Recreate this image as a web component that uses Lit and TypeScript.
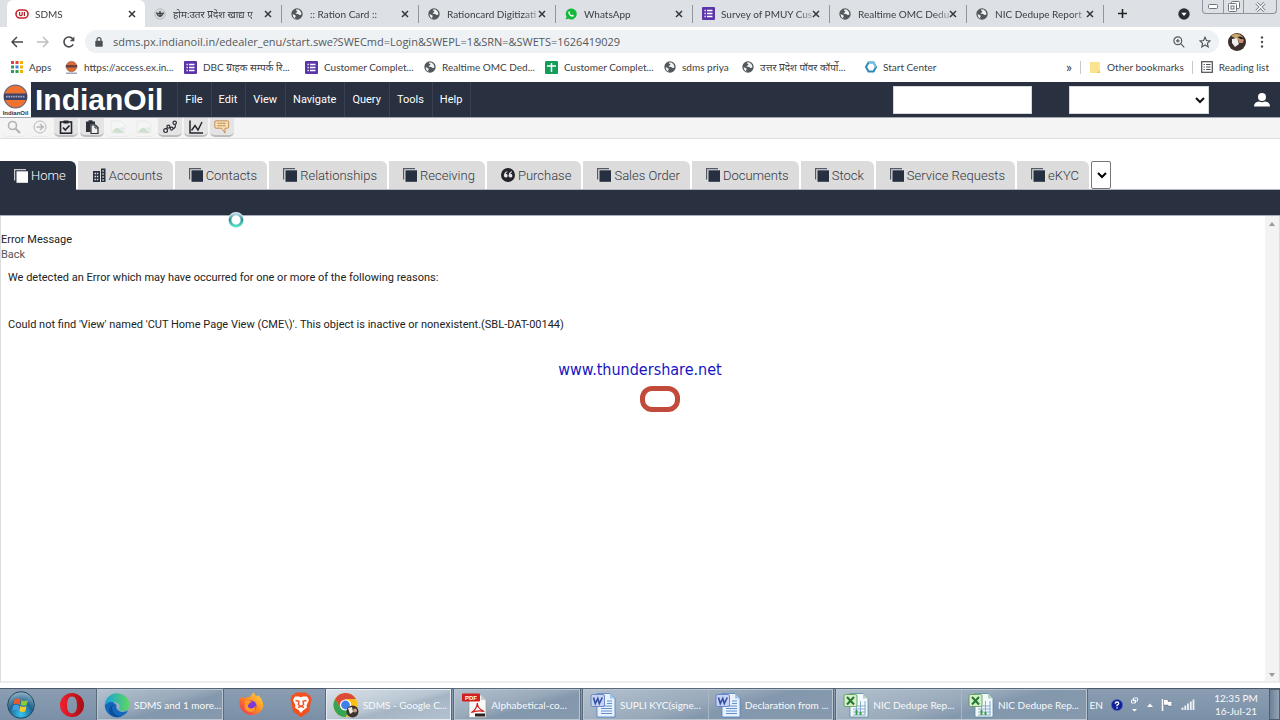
import { LitElement, html, svg, css, TemplateResult } from "lit";
import { customElement } from "lit/decorators.js";
import { classMap } from "lit/directives/class-map.js";
import { styleMap } from "lit/directives/style-map.js";

const draw = (w: number, h: number, box: string, body: TemplateResult) =>
  html`<svg width=${w} height=${h} viewBox=${box} aria-hidden="true">${body}</svg>`;

const icons: Record<string, () => TemplateResult> = {
  siebel: () => draw(14, 14, "0 0 14 14", svg`
    <rect x="1" y="3" width="12" height="8" rx="4" fill="#fff" stroke="#c8242b" stroke-width="1.6"/>
    <path d="M4.600 5v2.200q0 1.500 1.300 1.500t1.300-1.500V5M9.400 5v4" fill="none" stroke="#a81c22" stroke-width="1.200"/>`),
  emblem: () => draw(12, 12, "0 0 12 12", svg`
    <circle cx="6" cy="6" r="5.200" fill="#d4d7da" stroke="#96999c" stroke-width=".8" stroke-dasharray="1 .7"/>
    <path d="M2.200 4.600q2 2 3.800 0q1.800 2 3.800 0M3 6q1.400 2.600 3 2.400T9 6M6 3v6" fill="none" stroke="#3c4043" stroke-width="1.300"/>`),
  globe: () => draw(12, 12, "0 0 12 12", svg`
    <circle cx="6" cy="6" r="5.700" fill="#54585c"/>
    <path d="M1.500 6.300q1.800.2 3 1.200.8.900-.3 1.600-.4.900.3 1.800Q1.800 9.800 1.500 6.300zM5 1.400q-.300 1.500 1.200 1.600.500 1-.600 1.500-1.200.300-.800 1.200 2.200-.3 3.200.700.600.800 1.800.400l.7-.900Q10 2.800 7.500 1.500z" fill="#fff" opacity=".92"/>`),
  whatsapp: () => draw(12, 12, "0 0 12 12", svg`
    <path d="M.6 11.500l.900-2.800A5.500 5.500 0 1 1 3.500 10.700z" fill="#12b93c"/>
    <path d="M4.300 3.200l1 1.700-.5.700q.6 1.200 1.800 1.700l.7-.700 1.500.8q0 1.400-1.500 1.300Q3.900 8 3.200 4.500q0-1 1.100-1.300z" fill="#fff"/>`),
  forms: () => draw(13, 13, "0 0 13 13", svg`
    <rect width="13" height="13" rx="1" fill="#5b35a8"/>
    <path d="M5 3.500h5.500M5 6.500h5.500M5 9.500h5.500M2.500 3.500h1.300M2.500 6.500h1.300M2.500 9.500h1.300" stroke="#fff" stroke-width="1.400"/>`),
  sheet: () => draw(13, 13, "0 0 13 13", svg`
    <rect width="13" height="13" rx="1" fill="#129d58"/>
    <path d="M6.500 2v9M2 5h9" stroke="#fff" stroke-width="1.500"/>`),
  apps: () => draw(12, 12, "0 0 12 12", svg`
    <g><rect x="0" y="0" width="3" height="3" fill="#e0443a"/><rect x="4.500" y="0" width="3" height="3" fill="#e0443a"/><rect x="9" y="0" width="3" height="3" fill="#f0b400"/>
    <rect x="0" y="4.500" width="3" height="3" fill="#30a050"/><rect x="4.500" y="4.500" width="3" height="3" fill="#3f83f0"/><rect x="9" y="4.500" width="3" height="3" fill="#f0b400"/>
    <rect x="0" y="9" width="3" height="3" fill="#30a050"/><rect x="4.500" y="9" width="3" height="3" fill="#30a050"/><rect x="9" y="9" width="3" height="3" fill="#f0b400"/></g>`),
  orb: () => draw(13, 13, "0 0 13 13", svg`
    <circle cx="6.500" cy="5.500" r="5.300" fill="#dd6a30" stroke="#7a5a55" stroke-width=".5"/><rect x=".8" y="4" width="11.400" height="2.500" fill="#6a3f42"/>
    <path d="M1 12.200h11" stroke="#8a8fa8" stroke-width="1.200"/>`),
  center: () => draw(12, 12, "0 0 12 12", svg`
    <path d="M3.500 1.500h5L11 6l-2.500 4.500h-5L1 6z" fill="none" stroke="#2d87b8" stroke-width="2"/>
    <path d="M3.500 1.500h5L11 6" fill="none" stroke="#7cc0e2" stroke-width="2"/>`),
  folder: () => draw(12, 13, "0 0 12 13", svg`
    <path d="M1 1h9.500v8.500H11V12H1z" fill="#fae083"/><path d="M1 1h9.500v8.500L8 12H1z" fill="#fbe38e"/><path d="M8 12h3V9.500z" fill="#e9c648"/>`),
  list: () => draw(12, 12, "0 0 12 12", svg`
    <rect x=".7" y=".7" width="10.600" height="10.600" fill="none" stroke="#4a4d51" stroke-width="1.200"/>
    <path d="M2.500 3.500h1.300M5 3.500h4.500M2.500 6h1.300M5 6h4.500M2.500 8.500h1.300M5 8.500h4.500" stroke="#4a4d51" stroke-width="1.200"/>`),
  close: () => draw(8, 8, "0 0 8 8", svg`<path d="M1 1l6 6M7 1L1 7" stroke="#33373b" stroke-width="1.500"/>`),
  plus: () => draw(11, 11, "0 0 11 11", svg`<path d="M5.500 1v9M1 5.500h9" stroke="#222" stroke-width="1.600"/>`),
  down: () => draw(12, 12, "0 0 12 12", svg`<circle cx="6" cy="6" r="5.700" fill="#2b2e32"/><path d="M3.300 4.700h5.400L6 8z" fill="#fff"/>`),
  back: () => draw(12, 12, "0 0 12 12", svg`<path d="M12 6H1.500M6 1L1 6l5 5" fill="none" stroke="#46494d" stroke-width="1.500"/>`),
  forward: () => draw(12, 12, "0 0 12 12", svg`<path d="M0 6h10.500M6 1l5 5-5 5" fill="none" stroke="#bcbfc2" stroke-width="1.500"/>`),
  reload: () => draw(12, 12, "0 0 12 12", svg`<path d="M10.200 8.300A4.900 4.900 0 1 1 9.700 2.800" fill="none" stroke="#46494d" stroke-width="1.600"/><path d="M11.400.6v4.600H6.800z" fill="#46494d"/>`),
  lock: () => draw(8, 10, "0 0 8 10", svg`<rect x=".3" y="3.800" width="7.400" height="6" rx=".8" fill="#4d5155"/><path d="M2 4V2.700a2 2 0 0 1 4 0V4" fill="none" stroke="#4d5155" stroke-width="1.200"/>`),
  zoom: () => draw(12, 12, "0 0 12 12", svg`<circle cx="4.800" cy="4.800" r="3.900" fill="none" stroke="#55595d" stroke-width="1.200"/><path d="M7.700 7.700L11.300 11.300M3 4.800h3.600M4.800 3v3.600" stroke="#55595d" stroke-width="1.200"/>`),
  star: () => draw(12, 12, "0 0 12 12", svg`<path d="M6 1.200l1.500 3.300 3.600.4-2.700 2.400.8 3.600L6 9l-3.200 1.900.8-3.600L.9 4.900l3.600-.4z" fill="none" stroke="#4d5155" stroke-width="1.100"/>`),
  avatar: () => draw(18, 18, "0 0 18 18", svg`
    <circle cx="9" cy="9" r="9" fill="#3a2f2a"/><path d="M3 3Q9-2 15 4L12 8 7 5z" fill="#c9a667"/><path d="M4 6l5-1 2 6-4 3-3-4z" fill="#f0efee"/>
    <circle cx="13" cy="7.500" r="2.600" fill="#c98f72"/><path d="M9.500 4.500q3-2.500 6 1l-2 .8z" fill="#241b18"/>`),
  dots: () => draw(4, 12, "0 0 4 12", svg`<g fill="#4d5155"><circle cx="2" cy="1.500" r="1.200"/><circle cx="2" cy="6" r="1.200"/><circle cx="2" cy="10.500" r="1.200"/></g>`),
  user: () => draw(16, 16, "0 0 16 16", svg`<circle cx="8" cy="5" r="4" fill="#fff"/><path d="M0 14.500Q0 10 5 9.500q3 1.500 6 0 5 .5 5 5z" fill="#fff"/>`),
  logo: () => draw(31, 35, "0 0 31 35", svg`
    <rect width="31" height="35" fill="#fff"/><circle cx="15.500" cy="14.500" r="11.400" fill="#ee7330" stroke="#6d6678" stroke-width="1.200"/>
    <rect x="4" y="11.500" width="23" height="6.500" rx="1" fill="#3c4268"/><path d="M6 14.700h19" stroke="#a9aec8" stroke-width="1.800" stroke-dasharray="1.600 .8"/>
    <text x="15.500" y="32.500" text-anchor="middle" font-family="Liberation Sans" font-weight="700" font-size="6" fill="#2b3155">IndianOil</text>`),
  search: () => draw(14, 14, "0 0 14 14", svg`<circle cx="5.500" cy="5.500" r="4" fill="none" stroke="#b4b4b4" stroke-width="1.600"/><path d="M8.500 8.500L13 13" stroke="#b4b4b4" stroke-width="2.200"/>`),
  go: () => draw(14, 14, "0 0 14 14", svg`<circle cx="7" cy="7" r="6" fill="none" stroke="#b8b8b8" stroke-width="1"/><path d="M3.500 7h6M7 4l3.200 3L7 10" fill="none" stroke="#b8b8b8" stroke-width="1.500"/>`),
  check: () => draw(14, 14, "0 0 14 14", svg`<rect x="1.500" y="2" width="11" height="11.200" fill="none" stroke="#23262d" stroke-width="1.600"/><rect x="4.500" y=".5" width="5" height="3" fill="#23262d"/><path d="M4 7.500l2.300 2.500L10.500 5.500" fill="none" stroke="#23262d" stroke-width="1.700"/>`),
  paste: () => draw(14, 14, "0 0 14 14", svg`<path d="M1 1.500h9v3H5.500V12H1z" fill="#2d3036"/><rect x="3.500" y=".3" width="4" height="2" fill="#2d3036"/><path d="M6 5h4.500L13 7.500v6H6z" fill="#eee" stroke="#2d3036" stroke-width="1.200"/><path d="M10 5v3h3" fill="none" stroke="#2d3036"/>`),
  faded: () => draw(16, 14, "0 0 16 14", svg`<path d="M1 1h10l4 4v8H1z" fill="#f4f6f4" stroke="#e8eae9"/><path d="M2 12.500q4-7 8-3l4 3.500z" fill="#cfdfce"/><path d="M9 8l5 5V7z" fill="#e2ebf0"/>`),
  nodes: () => draw(14, 14, "0 0 14 14", svg`<g fill="none" stroke="#2c2f35" stroke-width="1.200"><circle cx="2.600" cy="10.600" r="1.900"/><circle cx="5.400" cy="6.600" r="1.500"/><circle cx="8.600" cy="8.600" r="1.500"/><circle cx="11.700" cy="2.800" r="1.700"/><path d="M12.300 4.600q.6 3.400-2.400 4M3.300 8.800l1.200-1.200"/></g>`),
  chart: () => draw(14, 14, "0 0 14 14", svg`<path d="M1 .5v12.500h13" fill="none" stroke="#23262d" stroke-width="1.500"/><path d="M2.500 10.500L6 5.500l3 4.500 4-8" fill="none" stroke="#23262d" stroke-width="1.400"/>`),
  note: () => draw(16, 14, "0 0 16 14", svg`<path d="M2 .8h11.500q1.200 0 1.200 1.200v5q0 1.200-1.200 1.200H11V13L7.500 8.200H2Q.8 8.200.8 7V2Q.8.8 2 .8z" fill="#f8deb2" stroke="#c0905a"/><path d="M3.500 3.200h8.500M3.500 5.700h8.500" stroke="#b1834e" stroke-width="1.100" stroke-dasharray="2.200 .5"/>`),
  pages: () => draw(14, 14, "0 0 14 14", svg`<path d="M.6 11.500V.6H12" fill="none" stroke="currentColor" stroke-width="1.200" opacity=".75"/><rect x="2.500" y="2.300" width="11.500" height="11.500" fill="currentColor"/>`),
  building: () => draw(14, 14, "0 0 14 14", svg`<path d="M1 3h7v11H1zM9 .5h4.500V14H9z" fill="#293040"/><path d="M2.500 5.500h4.500M2.500 8.500h4.500M2.500 11.500h4.500M10.300 3h2M10.300 6h2M10.300 9h2M10.300 12h2" stroke="#dcdcdc" stroke-width="1.300" stroke-dasharray="1.500 .8"/>`),
  quote: () => draw(14, 14, "0 0 14 14", svg`<circle cx="7" cy="7" r="7" fill="#23252b"/><path d="M6.300 3.200Q3 4 2.900 7.500a1.900 1.900 0 1 0 1.700-1.700Q5 4.600 6.300 4.300zM11 3.200Q7.700 4 7.600 7.500a1.900 1.900 0 1 0 1.700-1.700Q9.700 4.600 11 4.300z" fill="#e4e4e4"/>`),
  start: () => draw(28, 28, "0 0 28 28", svg`
    <defs><radialGradient id="g1" cx=".5" cy=".85" r=".9"><stop offset="0" stop-color="#38c5ee"/><stop offset=".5" stop-color="#1d6594"/><stop offset="1" stop-color="#a9c0cf"/></radialGradient></defs>
    <circle cx="14" cy="14" r="13.300" fill="url(#g1)" stroke="#27465c"/>
    <path d="M7.500 8.500q3-2 6 0l-1 5q-3-1.700-6 0z" fill="#ea5a29"/><path d="M14.500 9q3 1.700 6.500 0l-1.300 5q-3 1.500-6.200-.3z" fill="#8fc73e"/>
    <path d="M6.200 14.700q3-1.700 6 0l-1 5q-3-1.700-6 0z" fill="#3f9fe0"/><path d="M13.300 15q3 1.800 6.200.2l-1.200 5q-3 1.500-6-.3z" fill="#fbc926"/>`),
  opera: () => draw(26, 26, "0 0 26 26", svg`<defs><linearGradient id="g2" x2="1" y2="0"><stop offset="0" stop-color="#f4202f"/><stop offset="1" stop-color="#a70e16"/></linearGradient></defs>
    <path fill-rule="evenodd" d="M13 1a12 12 0 1 0 0 24a12 12 0 1 0 0-24zM13 4.500q5 0 5 8.500t-5 8.500-5-8.500 5-8.500z" fill="url(#g2)"/>`),
  edge: () => draw(26, 26, "0 0 26 26", svg`<defs><linearGradient id="g3" x2="1" y2="0"><stop offset="0" stop-color="#1ba0dc"/><stop offset="1" stop-color="#5bd85f"/></linearGradient></defs>
    <path d="M.7 13A12.300 12.300 0 0 0 20 23q3-2 4-4.500-5 2.500-9 .5-3.500-2-2.500-6l-6-5z" fill="#1268bd"/>
    <path d="M.8 13A12.300 12.300 0 0 1 25.300 12q.3 6.500-5.500 7-6 .3-4.500-3 1.500-3-2.300-5Q6 7.500.8 13z" fill="url(#g3)"/>
    <path d="M9.500 12.500q-3 4 .8 9 3 3.500 7.700 2.500-3.500 2-8 .8Q4 22 5.500 16q1-3 4-3.500z" fill="#0c4f9c"/>`),
  firefox: () => draw(26, 26, "0 0 26 26", svg`<defs><linearGradient id="g4" x1="1" x2="0" y2="1"><stop offset="0" stop-color="#ffe14a"/><stop offset=".5" stop-color="#ff8a1f"/><stop offset="1" stop-color="#f0245e"/></linearGradient></defs>
    <path d="M2 7l1.500-3 2.500 2.500q3-2 6-1.500 1-3 4-5 0 3 3 4.500l1-1.500q5 4 5.300 11.500A12 12 0 1 1 2 7z" fill="url(#g4)"/><circle cx="13" cy="14" r="5.500" fill="#7b3ad8"/><path d="M7 9q4-1.500 7 1-3 .5-3.500 2.500-2 3 2 4 4 0 5-3 .8 6.500-5.500 6.500Q5 19 7 9z" fill="#ff9a26"/>`),
  brave: () => draw(22, 26, "0 0 22 26", svg`<path d="M6 .5h10l2.500 2.500H20l1.700 4.500-1 3-1.700 9L11 25.500 3 19.500l-1.700-9-1-3L2 3h1.500z" fill="#f1501f"/><path d="M5 4.500h4l2 .7 2-.7h4L19 8l-2.500 5.500.5 2-4 3L11 21l-2-2.500-4-3 .5-2L3 8z" fill="#fff"/><path d="M5.500 8.500l3.500.8-.7 3.200 2.700 2 2.700-2-.7-3.200 3.500-.8M8 15.500l3-1.200 3 1.200" fill="none" stroke="#f1501f" stroke-width="1.400"/>`),
  chrome: () => draw(26, 26, "0 0 26 26", svg`<circle cx="12.500" cy="13" r="12" fill="#fbc116"/><path d="M2.100 7A12 12 0 0 1 22.900 7H12.500L7.300 16z" fill="#dc4a3a"/><path d="M2.100 7A12 12 0 0 0 12.500 25l5.200-9-10.400 0z" fill="#35a554"/>
    <circle cx="12.500" cy="13" r="5.600" fill="#fff"/><circle cx="12.500" cy="13" r="4.400" fill="#3f7fe8"/><circle cx="19.500" cy="19.500" r="6" fill="#3d332c"/><path d="M15 16l4-1 1 5-3 2z" fill="#efece8"/><circle cx="22" cy="18.500" r="2" fill="#c9a27e"/>`),
  pdf: () => draw(26, 26, "0 0 26 26", svg`<path d="M8 3h12l5 5v17.500H8z" fill="#f8f8f8" stroke="#9a9a9a" stroke-width=".7"/><path d="M20 3v5h5z" fill="#ccc"/><rect x="1" y="1.500" width="18" height="8" rx="1" fill="#d21f1f"/>
    <text x="10" y="8" text-anchor="middle" font-family="Liberation Sans" font-weight="700" font-size="6" fill="#fff">PDF</text><path d="M10.500 20.500Q16 17 16.300 11q.3 6 7 8.500-7-1.500-13 1z" fill="none" stroke="#d21f1f" stroke-width="1.200"/><rect x="14" y="21.500" width="10" height="3" fill="#2a2020"/>`),
  word: () => draw(26, 26, "0 0 26 26", svg`<path d="M7 1.500h13l5 5V25H7z" fill="#e9f2fc" stroke="#4c7fc4" stroke-width=".8"/><path d="M20 1.500v5h5z" fill="#9fc3ea"/><path d="M11 14h11M11 16.500h11M11 19h11M11 21.500h11M17 9h5M17 11.500h5" stroke="#5f90d0" stroke-width="1.100"/>
    <rect x="1" y="2.500" width="13.500" height="12" rx="1.500" fill="#c5d2f3" stroke="#5873bb" stroke-width=".8"/><path d="M3.500 5.500l1.800 6 2.500-5 1.500 5 3-6" fill="none" stroke="#3450a0" stroke-width="1.600"/>`),
  excel: () => draw(26, 26, "0 0 26 26", svg`<path d="M7 1.500h13l5 5V25H7z" fill="#f2f8fc" stroke="#5b8a9c" stroke-width=".8"/><path d="M20 1.500v5h5z" fill="#b4d4c0"/><path d="M10 14h12.500M10 17h12.500M10 20h12.500M10 23h12.500M13.500 14v9M17.500 9v14M22 9v14" stroke="#7aa5c8" stroke-width=".9"/><path d="M13.500 18v5M17.500 20v3" stroke="#3c9b46" stroke-width="2"/>
    <rect x="1" y="2.500" width="13" height="12" rx="1.500" fill="#d8ecd0" stroke="#4d9a45" stroke-width=".8"/><path d="M4 5l7 7.500M11 5l-7 7.500" stroke="#237a2c" stroke-width="2"/>`),
  help: () => draw(12, 12, "0 0 12 12", svg`<circle cx="6" cy="6" r="5.600" fill="#10209a" stroke="#5363b8" stroke-width=".6"/><path d="M4.200 4.700Q4.300 3 6 3t1.800 1.500Q7.800 5.500 6 6.200v1.100M6 8.300v1.300" fill="none" stroke="#fff" stroke-width="1.300"/>`),
  restore: () => draw(8, 16, "0 0 8 16", svg`<path d="M2.500 1h4v3h-4zM.5 3h4v3h-4z" fill="#7f93a9" stroke="#fff" stroke-width=".9"/><path d="M1 12h5l-2.500 2.500z" fill="#fff"/>`),
  up: () => draw(6, 4, "0 0 6 4", svg`<path d="M0 4l3-3.500L6 4z" fill="#f5f8fa"/>`),
  flag: () => draw(12, 13, "0 0 12 13", svg`<path d="M1.500 1v12" stroke="#fff" stroke-width="1.500"/><path d="M2.500 1.500h4.500V3.500h4.500L10.500 6l1 2H7V7H2.500z" fill="#fff" stroke="#41505f" stroke-width=".4"/>`),
  bars: () => draw(14, 11, "0 0 14 11", svg`<path d="M1.500 8.500V11M4.300 6.500V11M7 4.500V11M9.800 2.500V11M12.500.5V11" stroke="#eef2f5" stroke-width="1.800"/>`),
  minimize: () => draw(10, 5, "0 0 10 5", svg`<rect x=".5" y=".5" width="9" height="4" rx="1" fill="#fff" stroke="#6c737a"/>`),
  maximize: () => draw(12, 11, "0 0 12 11", svg`<rect x="3.500" y=".5" width="8" height="7" rx="1" fill="#fff" stroke="#6c737a"/><rect x=".5" y="2.500" width="8" height="8" rx="1" fill="#fff" stroke="#6c737a"/><rect x="3" y="5" width="3" height="3" fill="#fff" stroke="#6c737a"/>`),
  shut: () => draw(11, 10, "0 0 11 10", svg`<path d="M1.500 1L9.500 9M9.500 1L1.500 9" stroke="#6c737a" stroke-width="3"/><path d="M1.500 1L9.500 9M9.500 1L1.500 9" stroke="#fff" stroke-width="1.400"/>`),
};

const browserTabs = [
  ["siebel", "SDMS"], ["emblem", "होम:उतर प्रदेश खाद्य ए"], ["globe", ":: Ration Card ::"],
  ["globe", "Rationcard Digitizati"], ["whatsapp", "WhatsApp"], ["forms", "Survey of PMUY Cus"],
  ["globe", "Realtime OMC Dedu"], ["globe", "NIC Dedupe Report"],
];

const bookmarks: [string, string, number][] = [
  ["apps", "Apps", 54], ["orb", "https://access.ex.in...", 119], ["forms", "DBC ग्राहक सम्पर्क रि...", 121],
  ["forms", "Customer Complet...", 119], ["globe", "Realtime OMC Ded...", 121], ["sheet", "Customer Complet...", 119],
  ["globe", "sdms priya", 78], ["globe", "उत्तर प्रदेश पॉवर कॉर्पो...", 123], ["center", "Start Center", 80],
];

const menus = ["File", "Edit", "View", "Navigate", "Query", "Tools", "Help"];

const tools: [string, string, boolean][] = [
  ["search", "Search", false], ["go", "Go", false], ["check", "Site map", true], ["paste", "Paste", true],
  ["faded", "Image", false], ["faded", "Export", false], ["nodes", "Process", true], ["chart", "Charts", true], ["note", "Notes", true],
];

const screens = [
  ["pages", "Home"], ["building", "Accounts"], ["pages", "Contacts"], ["pages", "Relationships"], ["pages", "Receiving"],
  ["quote", "Purchase"], ["pages", "Sales Order"], ["pages", "Documents"], ["pages", "Stock"], ["pages", "Service Requests"], ["pages", "eKYC"],
];

const ui = css`
  :host { display: block; }
  * { box-sizing: border-box; }
  svg { display: block; flex: none; }
  button { font: inherit; color: inherit; background: none; border: 0; padding: 0; margin: 0; display: flex; align-items: center; justify-content: center; }
  a { color: inherit; text-decoration: none; }
`;

@customElement("browser-chrome")
export class BrowserChrome extends LitElement {
  static styles = [ui, css`
    :host { font: 10px/16px Lato, "Noto Sans", "Noto Sans Devanagari", sans-serif; color: #3c4043; background: #fff; }
    .strip { display: flex; height: 27px; background: #dde1e6; padding-left: 7px; }
    .tab { flex: 0 1 137px; min-width: 0; display: flex; align-items: center; gap: 6px; padding: 0 9px 0 8px; }
    .tab.on { flex-basis: 138px; background: #fff; border-radius: 6px 6px 0 0; }
    .tab.line { border-right: 1px solid #a2a7ac; border-image: linear-gradient(transparent 6px, #8f959b 6px 22px, transparent 22px) 1; }
    .fav { width: 14px; flex: none; display: flex; justify-content: center; }
    .name { flex: 1; min-width: 0; margin-right: -6px; white-space: nowrap; overflow: hidden; -webkit-mask-image: linear-gradient(90deg, #000 76px, transparent 98px); mask-image: linear-gradient(90deg, #000 76px, transparent 98px); }
    .add { width: 37px; }
    .chev { margin-left: auto; margin-right: 12px; }
    .win { display: flex; height: 14px; border: 1px solid #8e959c; border-top: 0; border-radius: 0 0 4px 4px; margin-right: 3px; }
    .win button { width: 20px; }
    .win button + button { border-left: 1px solid #8e959c; }
    .win button:last-child { width: 33px; }
    .nav { display: flex; align-items: center; height: 29px; padding: 0 16px 0 11px; gap: 14px; }
    .pill { flex: 1; min-width: 0; height: 23px; border-radius: 12px; background: #eff2f4; display: flex; align-items: center; gap: 8px; padding: 0 8px 0 10px; margin: 0 -5px 0 -4px; }
    .url { flex: 1; min-width: 0; height: 20px; border: 0; outline: 0; padding: 0 0 0 2px; font: 11px/20px "Open Sans", "Noto Sans", sans-serif; color: #54585c; background: none; }
    .pill button + button { margin-left: 6px; }
    .marks { display: flex; align-items: center; height: 26px; padding: 0 11px 4px; }
    .mark { display: flex; align-items: center; gap: 6px; white-space: nowrap; }
    .more { margin-left: auto; font-size: 14px; }
    .rule { width: 1px; height: 13px; background: #c6cacd; margin: 0 8px; }
  `];
  render() {
    return html`
      <div class="strip">
        ${browserTabs.map(([icon, name], i) => html`
          <div class=${classMap({ tab: true, on: i === 0, line: i > 0 })}>
            <span class="fav">${icons[icon]()}</span><span class="name">${name}</span>
            <button aria-label="Close tab">${icons.close()}</button>
          </div>`)}
        <button class="add" aria-label="New tab">${icons.plus()}</button>
        <button class="chev" aria-label="Search tabs">${icons.down()}</button>
        <div class="win">
          <button aria-label="Minimize">${icons.minimize()}</button>
          <button aria-label="Restore">${icons.maximize()}</button>
          <button aria-label="Close">${icons.shut()}</button>
        </div>
      </div>
      <div class="nav">
        <button aria-label="Back">${icons.back()}</button>
        <button aria-label="Forward">${icons.forward()}</button>
        <button aria-label="Reload">${icons.reload()}</button>
        <div class="pill">
          ${icons.lock()}
          <input class="url" aria-label="Address" value="sdms.px.indianoil.in/edealer_enu/start.swe?SWECmd=Login&SWEPL=1&SRN=&SWETS=1626419029">
          <button aria-label="Zoom">${icons.zoom()}</button>
          <button aria-label="Bookmark">${icons.star()}</button>
        </div>
        <button aria-label="Profile">${icons.avatar()}</button>
        <button aria-label="Menu">${icons.dots()}</button>
      </div>
      <div class="marks">
        ${bookmarks.map(([icon, name, w]) => html`<a class="mark" href="#" style=${styleMap({ width: w + "px" })}>${icons[icon]()}${name}</a>`)}
        <button class="more" aria-label="More bookmarks">»</button>
        <span class="rule"></span>
        <a class="mark" href="#">${icons.folder()}Other bookmarks</a>
        <span class="rule"></span>
        <a class="mark" href="#">${icons.list()}Reading list</a>
      </div>`;
  }
}

@customElement("portal-page")
export class PortalPage extends LitElement {
  static styles = [ui, css`
    :host { flex: 1; display: flex; flex-direction: column; font: 11px/15px Roboto, sans-serif; color: #222; background: #fff; min-height: 0; }
    .bar { display: flex; align-items: center; height: 36px; background: #293040; color: #fff; border-bottom: 1px solid #a3a8b0; padding-right: 10px; }
    .brand { font: bold 30px/35px "Liberation Sans", Arial, sans-serif; padding: 0 14px 0 4px; }
    .menu { display: flex; align-self: stretch; border-left: 1px solid #3a4152; }
    .menu button { padding: 0 8px 0 7px; border-right: 1px solid #3a4152; }
    .find { width: 139px; height: 28px; border: 1px solid #d4d7dc; padding: 0 4px; margin-left: auto; background: #fff; }
    .scope { width: 140px; height: 28px; border: 1px solid #d4d7dc; border-radius: 0; margin: 0 45px 0 37px; background: #fff; color: #111; }
    .tools { display: flex; gap: 2px; height: 21px; background: #f4f4f4; border-bottom: 1px solid #dedede; padding: 0 2px; }
    .tools button { width: 24px; height: 19px; border-radius: 0 0 5px 5px; border-bottom: 1px solid #eaeaea; }
    .tools .live { background: #e4e4e4; border-bottom: 2px solid #bdbdbd; }
    .tabs { display: flex; gap: 2px; height: 51px; padding-top: 22px; border-bottom: 1px solid #b3b7bf; font-size: 13px; font-weight: 300; color: #33373f; }
    .tabs button { background: #dcdcdc; border-radius: 0 6px 0 0; padding: 0 10px 0 14px; gap: 3px; white-space: nowrap; }
    .tabs svg { color: #273040; }
    .tabs .on, .tabs .on svg { color: #fff; }
    .tabs .on { background: #293040; margin-bottom: -1px; }
    .jump { width: 20px; height: 28px; padding: 0; border: 1px solid #777; border-radius: 2px; background: #fff; }
    .band { height: 26px; background: #293040; border-bottom: 1px solid #a9aeb8; position: relative; }
    .busy { position: absolute; left: 228px; top: 22px; z-index: 1; }
    .body { flex: 1; min-height: 0; display: flex; border: 1px solid #dedede; border-top: 0; border-bottom: 2px solid #ededed; margin-bottom: 5px; position: relative; }
    .text { flex: 1; padding-top: 16px; }
    .text h1 { font: inherit; margin: 0; }
    .back { color: #555; display: block; width: fit-content; }
    .text p { margin: 0 7px; padding-top: 8px; }
    .text p + p { padding-top: 32px; }
    .scroll { width: 14px; background: #f3f3f3; display: flex; flex-direction: column; justify-content: space-between; align-items: center; padding: 6px 0 4px; }
    .mark { position: absolute; top: 144px; left: 0; right: 0; text-align: center; font: 16px/20px "DejaVu Sans Condensed", Tahoma, sans-serif; color: #1414c4; }
    .ring { position: absolute; top: 170px; left: 50%; width: 40px; height: 26px; border: 5px solid #c14a3b; border-radius: 12px; }
  `];
  render() {
    return html`
      <div class="bar">
        ${icons.logo()}<span class="brand">IndianOil</span>
        <nav class="menu">${menus.map((m) => html`<button>${m}</button>`)}</nav>
        <input class="find" aria-label="Find">
        <select class="scope" aria-label="Search scope"><option></option></select>
        <button aria-label="User">${icons.user()}</button>
      </div>
      <div class="tools">
        ${tools.map(([icon, name, live]) => html`<button class=${classMap({ live })} aria-label=${name}>${icons[icon]()}</button>`)}
      </div>
      <nav class="tabs">
        ${screens.map(([icon, name], i) => html`<button class=${classMap({ on: i === 0 })}>${icons[icon]()}${name}</button>`)}
        <select class="jump" aria-label="More screens"><option></option></select>
      </nav>
      <div class="band">
        <span class="busy">${draw(16, 16, "0 0 16 16", svg`
          <defs><linearGradient id="b" x2="0" y2="1"><stop offset="0" stop-color="#b5d3e6"/><stop offset=".45" stop-color="#2f8f98"/><stop offset="1" stop-color="#4fe0c4"/></linearGradient></defs>
          <circle cx="8" cy="8" r="6.200" fill="#fff" stroke="#e6f4f4" stroke-width="3.600"/><circle cx="8" cy="8" r="6" fill="none" stroke="url(#b)" stroke-width="2.600"/>`)}</span>
      </div>
      <main class="body">
        <div class="text">
          <h1>Error Message</h1>
          <a class="back" href="#">Back</a>
          <p>We detected an Error which may have occurred for one or more of the following reasons:</p>
          <p>Could not find 'View' named 'CUT Home Page View (CME\\)'. This object is inactive or nonexistent.(SBL-DAT-00144)</p>
        </div>
        <div class="scroll">
          ${draw(6, 4, "0 0 6 4", svg`<path d="M0 4l3-4 3 4z" fill="#9a9a9a"/>`)}
          ${draw(6, 4, "0 0 6 4", svg`<path d="M0 0h6L3 4z" fill="#9a9a9a"/>`)}
        </div>
        <div class="mark">www.thundershare.net</div>
        <div class="ring"></div>
      </main>`;
  }
}

@customElement("task-bar")
export class TaskBar extends LitElement {
  static styles = [ui, css`
    :host { font: 10px/18px Lato, "Noto Sans", sans-serif; color: #f8fafc; }
    .row { display: flex; height: 32px; background: linear-gradient(#8a9db2, #7b90a7); border-top: 1px solid #4b5968; }
    .pin { width: 50px; flex: none; }
    .pin.first { width: 47px; padding-right: 5px; }
    .group { display: flex; flex: 0 1 auto; min-width: 0; border: 1px solid #b9c6d2; outline: 1px solid #5a6a7b; background: linear-gradient(165deg, #b3c1ce 0, #98a9ba 45%, #8498ad 60%, #8699ad); margin-right: 3px; }
    .task { width: 124px; gap: 4px; padding-left: 6px; justify-content: flex-start; white-space: nowrap; }
    .task + .task { border-left: 1px solid #a9b7c5; width: 125px; }
    .front { background: linear-gradient(165deg, #d9e1e8 0, #b9c6d2 50%, #a5b5c4 60%, #b3c2d0); border-color: #e6ecf1; }
    .tray { margin-left: auto; display: flex; align-items: center; gap: 8px; }
    .clock { width: 50px; margin: 0 8px; text-align: center; line-height: 13px; white-space: nowrap; }
    .desk { width: 11px; align-self: stretch; border: 1px solid #4f5f70; background: linear-gradient(90deg, #6c8096, #93a5b7); margin-left: -8px; }
  `];
  task(icon: string, name: string) {
    return html`<button class="task">${icons[icon]()}${name}</button>`;
  }
  render() {
    return html`<div class="row">
      <button class="pin first" aria-label="Start">${icons.start()}</button>
      <button class="pin" aria-label="Opera">${icons.opera()}</button>
      <div class="group">${this.task("edge", "SDMS and 1 more...")}</div>
      <button class="pin" aria-label="Firefox">${icons.firefox()}</button>
      <button class="pin" aria-label="Brave">${icons.brave()}</button>
      <div class="group front">${this.task("chrome", "SDMS - Google C...")}</div>
      <div class="group">${this.task("pdf", "Alphabetical-co...")}</div>
      <div class="group">${this.task("word", "SUPLI KYC(signe...")}${this.task("word", "Declaration from ...")}</div>
      <div class="group">${this.task("excel", "NIC Dedupe Rep...")}${this.task("excel", "NIC Dedupe Rep...")}</div>
      <div class="tray">
        <span>EN</span>${icons.help()}${icons.restore()}${icons.up()}${icons.flag()}${icons.bars()}
        <div class="clock">12:35 PM<br>16-Jul-21</div>
        <button class="desk" aria-label="Show desktop"></button>
      </div>
    </div>`;
  }
}

@customElement("app-root")
export class AppRoot extends LitElement {
  static styles = css`
    :host { display: flex; flex-direction: column; min-height: 100vh; background: #fff; overflow: hidden; }
  `;
  render() {
    return html`<browser-chrome></browser-chrome><portal-page></portal-page><task-bar></task-bar>`;
  }
}
